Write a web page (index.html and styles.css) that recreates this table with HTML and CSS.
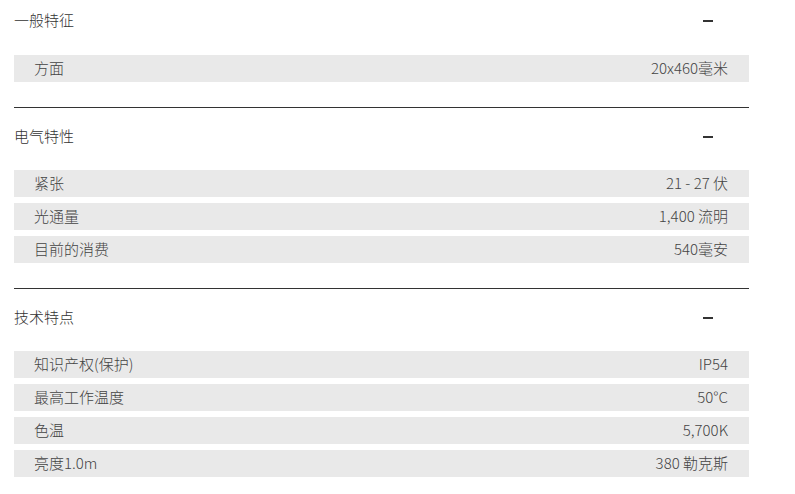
FILE: index.html
```html
<!DOCTYPE html>
<html lang="zh">
<head>
<meta charset="utf-8">
<link rel="stylesheet" href="styles.css">
</head>
<body>
<div class="specs">
  <section class="group">
    <div class="group-head"><span class="group-title">一般特征</span><span class="toggle"></span></div>
    <div class="rows">
      <div class="row"><span>方面</span><span>20x460毫米</span></div>
    </div>
  </section>
  <section class="group">
    <div class="group-head"><span class="group-title">电气特性</span><span class="toggle"></span></div>
    <div class="rows">
      <div class="row"><span>紧张</span><span>21 - 27 伏</span></div>
      <div class="row"><span>光通量</span><span>1,400 流明</span></div>
      <div class="row"><span>目前的消费</span><span>540毫安</span></div>
    </div>
  </section>
  <section class="group last">
    <div class="group-head"><span class="group-title">技术特点</span><span class="toggle"></span></div>
    <div class="rows">
      <div class="row"><span>知识产权(保护)</span><span>IP54</span></div>
      <div class="row"><span>最高工作温度</span><span>50°C</span></div>
      <div class="row"><span>色温</span><span>5,700K</span></div>
      <div class="row"><span>亮度1.0m</span><span>380 勒克斯</span></div>
    </div>
  </section>
</div>
</body>
</html>
```
FILE: styles.css
```css
html, body {
  margin: 0;
  padding: 0;
  background: #fff;
}
body {
  font-family: "Noto Sans CJK SC", "Noto Sans", sans-serif;
  font-size: 15px;
  font-weight: 300;
  color: #444;
}
.specs {
  width: 735px;
  margin-left: 14px;
}
.group {
  padding-bottom: 25px;
  border-bottom: 1px solid #333;
}
.group + .group {
  padding-top: 8px;
}
.group.last {
  border-bottom: none;
}
.group-head {
  height: 41px;
  display: flex;
  align-items: center;
  justify-content: space-between;
  padding-right: 36px;
}
.group-title {
  color: #333;
  position: relative;
  top: -1px;
}
.toggle {
  width: 10px;
  height: 2px;
  background: #333;
}
.rows {
  margin-top: 14px;
  display: flex;
  flex-direction: column;
  gap: 6px;
}
.group + .group .rows {
  margin-top: 13px;
}
.row {
  height: 27px;
  box-sizing: border-box;
  background: #e9e9e9;
  display: flex;
  align-items: center;
  justify-content: space-between;
  padding: 0 21px 2px 20px;
  line-height: 25px;
}
```
